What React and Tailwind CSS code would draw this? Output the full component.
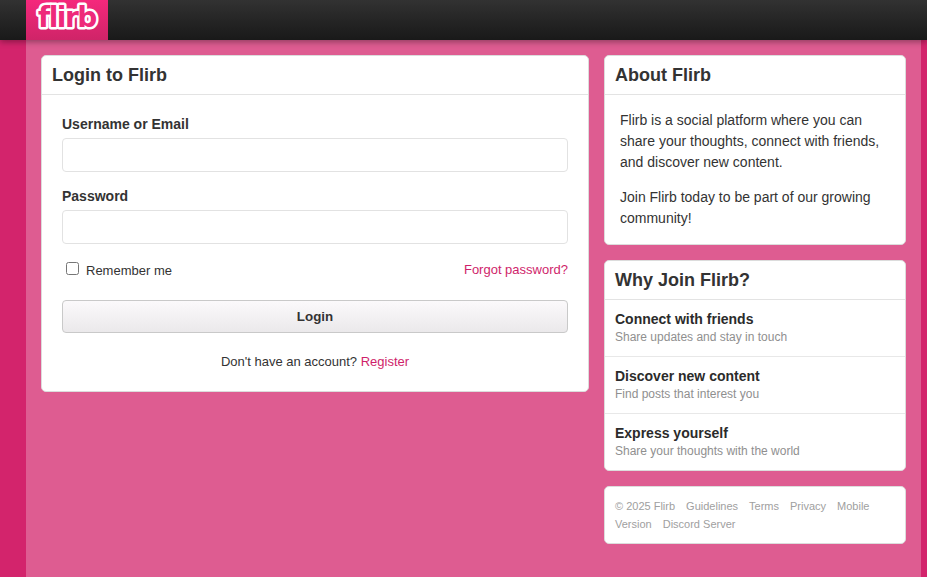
import React from 'react';

const cardClass = 'bg-white border border-[#dcdcdc] rounded-[5px]';

const CardTitle = ({ children }) => (
  <div className="h-[39px] pl-[10px] border-b border-[#e3e3e3] flex items-center">
    <h2 className="text-[18px] font-bold leading-[22px] text-[#333]">{children}</h2>
  </div>
);

const Field = ({ label, type }) => (
  <div className="mb-[16px]">
    <label className="block text-[14px] font-bold leading-[16px] mb-[6px] text-[#333]">{label}</label>
    <input type={type} className="block w-full h-[34px] bg-white border border-[#e2e2e2] rounded-[4px] outline-none" />
  </div>
);

const Feature = ({ title, text }) => (
  <div className="h-[57px] px-[10px] pt-[11px] border-b border-[#e8e8e8] last:border-b-0 last:h-[56px]">
    <div className="text-[14px] font-bold leading-[16px] text-[#2b2b2b]">{title}</div>
    <div className="text-[12px] leading-[18px] mt-px text-[#8f8f8f]">{text}</div>
  </div>
);

export default function App() {
  return (
    <div className="min-h-[577px] bg-[#d3246c] font-['Liberation_Sans',Arial,sans-serif] text-[#333] overflow-hidden">
      <header className="relative z-10 h-[40px] bg-gradient-to-b from-[#323232] to-[#191919] pl-[26px] shadow-[0_2px_6px_rgba(0,0,0,0.35)]">
        <div className="w-[82px] h-[40px] bg-gradient-to-b from-[#f5287c] to-[#cf2468]">
          {/* logo: real text with a rounded white outline */}
          <svg width="82" height="40" viewBox="0 0 82 40">
            <text
              x="12"
              y="27"
              fontFamily="'DejaVu Sans', sans-serif"
              fontWeight="700"
              fontSize="28"
              letterSpacing="-1.5"
              fill="#ee2a7a"
              stroke="#fff"
              strokeWidth="5"
              strokeLinejoin="round"
              paintOrder="stroke"
            >
              flirb
            </text>
          </svg>
        </div>
      </header>

      <div className="ml-[26px] w-[895px] min-h-[537px] bg-[#de5c91] p-[15px] flex gap-[15px] items-start">
        <main className={`${cardClass} w-[548px]`}>
          <CardTitle>Login to Flirb</CardTitle>
          <div className="px-[20px] pt-[21px] pb-[21px]">
            <Field label="Username or Email" type="text" />
            <Field label="Password" type="password" />
            <div className="flex justify-between items-center h-[20px]">
              <label className="flex items-center text-[13px] pt-[2px]">
                <input type="checkbox" className="w-[13px] h-[13px] ml-[4px] mr-[7px] mb-[5px]" />
                Remember me
              </label>
              <a href="#" className="text-[13px] text-[#cf1f6b]">Forgot password?</a>
            </div>
            <button className="block w-full h-[33px] mt-[20px] bg-gradient-to-b from-[#fbf9fb] to-[#ebe9eb] border border-[#c9c9c9] rounded-[4px] text-[13.33px] font-bold text-[#333]">
              Login
            </button>
            <p className="text-center text-[13px] leading-[16px] mt-[21px]">
              Don't have an account? <a href="#" className="text-[#cf1f6b]">Register</a>
            </p>
          </div>
        </main>

        <aside className="w-[302px] flex flex-col gap-[15px]">
          <section className={cardClass}>
            <CardTitle>About Flirb</CardTitle>
            <div className="px-[15px] py-[15px] text-[14px] leading-[21px]">
              <p>Flirb is a social platform where you can share your thoughts, connect with friends, and discover new content.</p>
              <p className="mt-[14px]">Join Flirb today to be part of our growing community!</p>
            </div>
          </section>

          <section className={cardClass}>
            <CardTitle>Why Join Flirb?</CardTitle>
            <Feature title="Connect with friends" text="Share updates and stay in touch" />
            <Feature title="Discover new content" text="Find posts that interest you" />
            <Feature title="Express yourself" text="Share your thoughts with the world" />
          </section>

          <footer className={`${cardClass} p-[10px] text-[11px] leading-[18px] text-[#a0a0a0]`}>
            <span className="mr-[11px]">© 2025 Flirb</span>
            <a href="#" className="mr-[11px]">Guidelines</a>
            <a href="#" className="mr-[11px]">Terms</a>
            <a href="#" className="mr-[11px]">Privacy</a>
            <a href="#" className="mr-[11px]">Mobile Version</a>
            <a href="#">Discord Server</a>
          </footer>
        </aside>
      </div>
    </div>
  );
}
